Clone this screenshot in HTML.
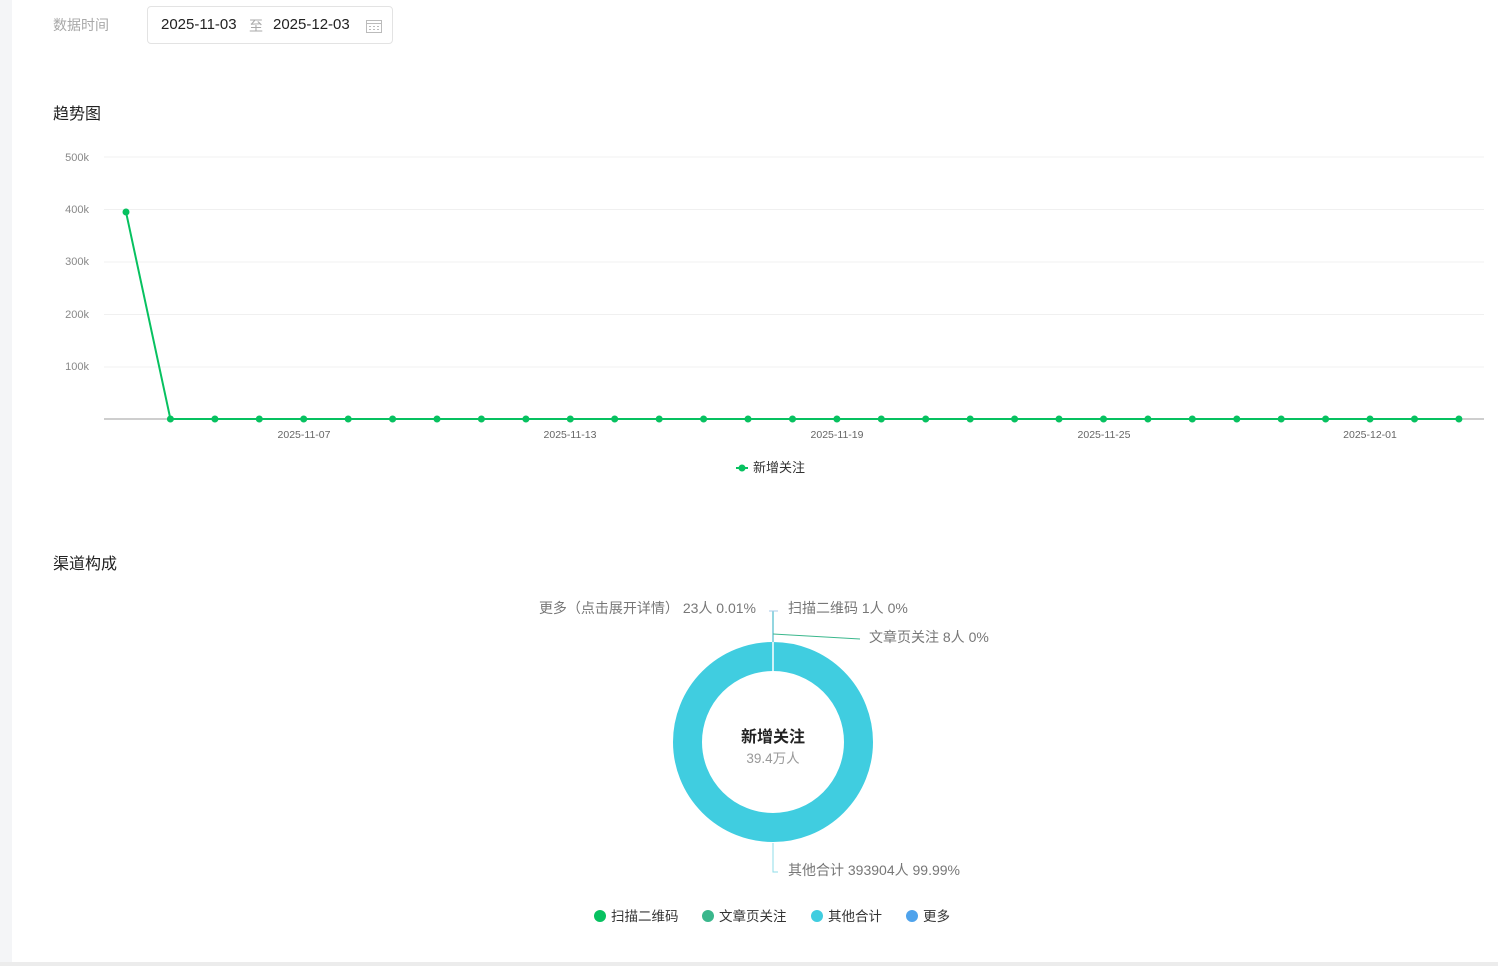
<!DOCTYPE html>
<html><head><meta charset="utf-8">
<style>
html,body{margin:0;padding:0;background:#fff;}
body{width:1498px;height:966px;position:relative;overflow:hidden;font-family:"Liberation Sans","Noto Sans CJK SC",sans-serif;}
.abs{position:absolute;white-space:nowrap;}
</style></head><body>
<div class="abs" style="left:0;top:0;width:12px;height:966px;background:#f4f5f7"></div>
<div class="abs" style="left:0;top:962px;width:1498px;height:4px;background:#ececec"></div>

<div class="abs" style="left:53px;top:15px;font-size:14px;color:#a8a8a8">数据时间</div>
<div class="abs" style="left:147px;top:6px;width:244px;height:36px;border:1px solid #e3e3e3;border-radius:4px;"></div>
<div class="abs" style="left:161px;top:16px;font-size:15px;color:#222">2025-11-03</div>
<div class="abs" style="left:249px;top:16px;font-size:14px;color:#aaa">至</div>
<div class="abs" style="left:273px;top:16px;font-size:15px;color:#222">2025-12-03</div>
<svg class="abs" style="left:366px;top:19px" width="16" height="14" viewBox="0 0 16 14"><rect x="0.5" y="1.5" width="15" height="12" fill="none" stroke="#bbb"/><line x1="0.5" y1="4.5" x2="15.5" y2="4.5" stroke="#bbb"/><g fill="#bbb"><rect x="3" y="7" width="2" height="1"/><rect x="7" y="7" width="2" height="1"/><rect x="11" y="7" width="2" height="1"/><rect x="3" y="10" width="2" height="1"/><rect x="7" y="10" width="2" height="1"/><rect x="11" y="10" width="2" height="1"/></g></svg>

<div class="abs" style="left:53px;top:100px;font-size:16px;color:#222">趋势图</div>
<div class="abs" style="left:53px;top:550px;font-size:16px;color:#222">渠道构成</div>

<svg class="abs" style="left:0;top:0" width="1498" height="966">
<g stroke="#f0f0f0" stroke-width="1">
<line x1="104" y1="157" x2="1484" y2="157"/><line x1="104" y1="209.5" x2="1484" y2="209.5"/><line x1="104" y1="262" x2="1484" y2="262"/><line x1="104" y1="314.5" x2="1484" y2="314.5"/><line x1="104" y1="367" x2="1484" y2="367"/>
</g>
<line x1="104" y1="419" x2="1484" y2="419" stroke="#bdbdbd" stroke-width="1.5"/>
<g font-size="11" fill="#888" text-anchor="end" font-family="Liberation Sans, sans-serif">
<text x="89" y="161">500k</text><text x="89" y="213">400k</text><text x="89" y="265">300k</text><text x="89" y="318">200k</text><text x="89" y="370">100k</text>
</g>
<g font-size="10.5" fill="#666" text-anchor="middle" font-family="Liberation Sans, sans-serif">
<text x="304" y="438">2025-11-07</text><text x="570" y="438">2025-11-13</text><text x="837" y="438">2025-11-19</text><text x="1104" y="438">2025-11-25</text><text x="1370" y="438">2025-12-01</text>
</g>
<polyline points="126,212 170.4,419 1458.9,419" fill="none" stroke="#07c160" stroke-width="2"/>
<g fill="#07c160">
<circle cx="126" cy="212" r="3.5"/><circle cx="170.4" cy="419" r="3.5"/><circle cx="214.9" cy="419" r="3.5"/><circle cx="259.3" cy="419" r="3.5"/><circle cx="303.7" cy="419" r="3.5"/><circle cx="348.2" cy="419" r="3.5"/><circle cx="392.6" cy="419" r="3.5"/><circle cx="437" cy="419" r="3.5"/><circle cx="481.4" cy="419" r="3.5"/><circle cx="525.9" cy="419" r="3.5"/><circle cx="570.3" cy="419" r="3.5"/><circle cx="614.7" cy="419" r="3.5"/><circle cx="659.2" cy="419" r="3.5"/><circle cx="703.6" cy="419" r="3.5"/><circle cx="748" cy="419" r="3.5"/><circle cx="792.5" cy="419" r="3.5"/><circle cx="836.9" cy="419" r="3.5"/><circle cx="881.3" cy="419" r="3.5"/><circle cx="925.7" cy="419" r="3.5"/><circle cx="970.2" cy="419" r="3.5"/><circle cx="1014.6" cy="419" r="3.5"/><circle cx="1059" cy="419" r="3.5"/><circle cx="1103.5" cy="419" r="3.5"/><circle cx="1147.9" cy="419" r="3.5"/><circle cx="1192.3" cy="419" r="3.5"/><circle cx="1236.8" cy="419" r="3.5"/><circle cx="1281.2" cy="419" r="3.5"/><circle cx="1325.6" cy="419" r="3.5"/><circle cx="1370" cy="419" r="3.5"/><circle cx="1414.5" cy="419" r="3.5"/><circle cx="1458.9" cy="419" r="3.5"/>
</g>
<line x1="736" y1="468" x2="748" y2="468" stroke="#07c160" stroke-width="2"/><circle cx="742" cy="468" r="3.5" fill="#07c160"/>
<text x="753" y="472" font-size="13" fill="#333" font-family="Liberation Sans, Noto Sans CJK SC, sans-serif">新增关注</text>

<circle cx="773" cy="742" r="85.5" fill="none" stroke="#40cde0" stroke-width="29"/>
<line x1="773" y1="642" x2="773" y2="671" stroke="#fff" stroke-width="1.5"/>
<line x1="773" y1="611" x2="773" y2="642" stroke="#6fc8d6" stroke-width="1.5"/>
<line x1="769" y1="611" x2="778" y2="611" stroke="#a8cbe8" stroke-width="1"/>
<line x1="773" y1="634" x2="860" y2="639" stroke="#3ab78c" stroke-width="1"/>
<polyline points="773,843 773,872 778,872" fill="none" stroke="#8fdde8" stroke-width="1"/>
<g font-size="14" fill="#777" font-family="Liberation Sans, Noto Sans CJK SC, sans-serif">
<text x="756" y="613" text-anchor="end">更多（点击展开详情） 23人 0.01%</text>
<text x="788" y="613">扫描二维码 1人 0%</text>
<text x="869" y="642">文章页关注 8人 0%</text>
<text x="788" y="875">其他合计 393904人 99.99%</text>
</g>
<text x="773" y="742" text-anchor="middle" font-size="16" font-weight="bold" fill="#222" font-family="Liberation Sans, Noto Sans CJK SC, sans-serif">新增关注</text>
<text x="773" y="763" text-anchor="middle" font-size="13.5" fill="#999" font-family="Liberation Sans, Noto Sans CJK SC, sans-serif">39.4万人</text>
<g font-size="13.5" fill="#333" font-family="Liberation Sans, Noto Sans CJK SC, sans-serif">
<circle cx="600" cy="916" r="6" fill="#07c160"/><text x="611" y="921">扫描二维码</text>
<circle cx="708" cy="916" r="6" fill="#3ab78c"/><text x="719" y="921">文章页关注</text>
<circle cx="817" cy="916" r="6" fill="#40cde0"/><text x="828" y="921">其他合计</text>
<circle cx="912" cy="916" r="6" fill="#4fa3ec"/><text x="923" y="921">更多</text>
</g>
</svg>
</body></html>
